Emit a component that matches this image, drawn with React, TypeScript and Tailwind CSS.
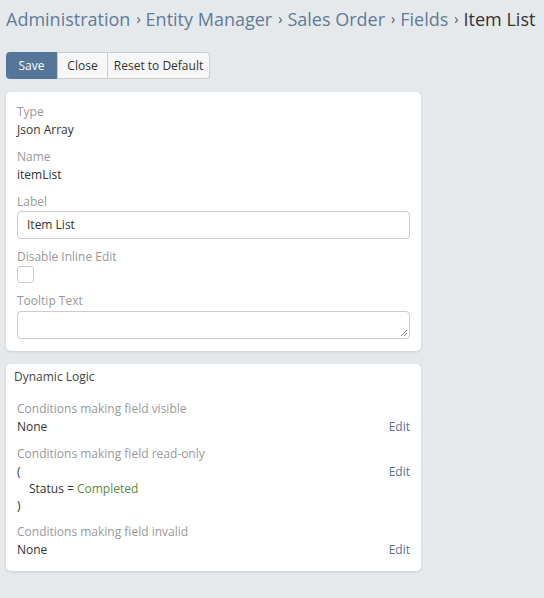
const font = { fontFamily: '"Open Sans", "Liberation Sans", sans-serif' };

function Field({ label, children }: { label: string; children: React.ReactNode }) {
  return (
    <div className="mb-[9px]">
      <div className="text-[12px] leading-[18px] text-[#999]">{label}</div>
      <div className="text-[12px] leading-[18px] text-[#333]">{children}</div>
    </div>
  );
}

function LogicRow({ label, children }: { label: string; children: React.ReactNode }) {
  return (
    <div className="mb-[9px]">
      <div className="text-[12px] leading-[18px] text-[#999]">{label}</div>
      <div className="flex justify-between text-[12px] leading-[18px] text-[#333]">
        <div>{children}</div>
        <a className="text-[#5a7391]">Edit</a>
      </div>
    </div>
  );
}

function Sep() {
  return <span className="ml-[6px] mr-[5px] text-[14px] text-[#555]">›</span>;
}

export default function App() {
  return (
    <div className="min-h-[598px] bg-[#e6e9ec] px-[6px] pt-[6px]" style={font}>
      <h1 className="flex items-center whitespace-nowrap text-[18px] leading-[26px] text-[#5f7b98]">
        <span>Administration</span>
        <Sep />
        <span>Entity Manager</span>
        <Sep />
        <span>Sales Order</span>
        <Sep />
        <span>Fields</span>
        <Sep />
        <span className="text-[#333]">Item List</span>
      </h1>

      <div className="mt-[20px] flex text-[12px]">
        <button className="h-[27px] w-[51px] rounded-l-[4px] bg-[#557698] text-white">Save</button>
        <button className="h-[27px] w-[51px] border border-[#ccc] bg-[#f7f7f7] text-[#333]">Close</button>
        <button className="h-[27px] w-[102px] rounded-r-[4px] border border-l-0 border-[#ccc] bg-[#f7f7f7] text-[#333]">
          Reset to Default
        </button>
      </div>

      <div className="mt-[13px] w-[415px] rounded-[5px] bg-white px-[11px] pb-[1px] pt-[11px] shadow-[0_1px_3px_rgba(0,0,0,0.12)]">
        <Field label="Type">Json Array</Field>
        <Field label="Name">itemList</Field>
        <div className="mb-[9px]">
          <div className="text-[12px] leading-[18px] text-[#999]">Label</div>
          <div className="flex h-[28px] items-center rounded-[4px] border border-[#ccc] px-[9px] text-[12px] text-[#333]">
            Item List
          </div>
        </div>
        <div className="mb-[9px]">
          <div className="text-[12px] leading-[18px] text-[#999]">Disable Inline Edit</div>
          <div className="h-[17px] w-[17px] rounded-[3px] border border-[#ccc]" />
        </div>
        <div className="mb-[11px]">
          <div className="text-[12px] leading-[18px] text-[#999]">Tooltip Text</div>
          <div className="relative mt-[1px] h-[28px] rounded-[4px] border border-[#ccc]">
            <svg className="absolute bottom-[1px] right-[1px]" width="9" height="9" viewBox="0 0 9 9">
              <path d="M8 2L2 8M8 5L5 8" stroke="#777" strokeWidth="1" />
            </svg>
          </div>
        </div>
      </div>

      <div className="mt-[13px] w-[415px] rounded-[5px] bg-white pb-[3px] shadow-[0_1px_3px_rgba(0,0,0,0.12)]">
        <div className="px-[8px] pt-[1px] text-[12px] leading-[24px] text-[#444]">Dynamic Logic</div>
        <div className="px-[11px] pt-[11px]">
          <LogicRow label="Conditions making field visible">None</LogicRow>
          <div className="mb-[9px]">
            <div className="text-[12px] leading-[18px] text-[#999]">Conditions making field read-only</div>
            <div className="flex justify-between text-[12px] leading-[17px] text-[#333]">
              <div>
                <div>(</div>
                <div className="pl-[12px]">
                  Status = <span className="text-[#5d8a3a]">Completed</span>
                </div>
                <div>)</div>
              </div>
              <a className="text-[#5a7391]">Edit</a>
            </div>
          </div>
          <LogicRow label="Conditions making field invalid">None</LogicRow>
        </div>
      </div>
    </div>
  );
}
